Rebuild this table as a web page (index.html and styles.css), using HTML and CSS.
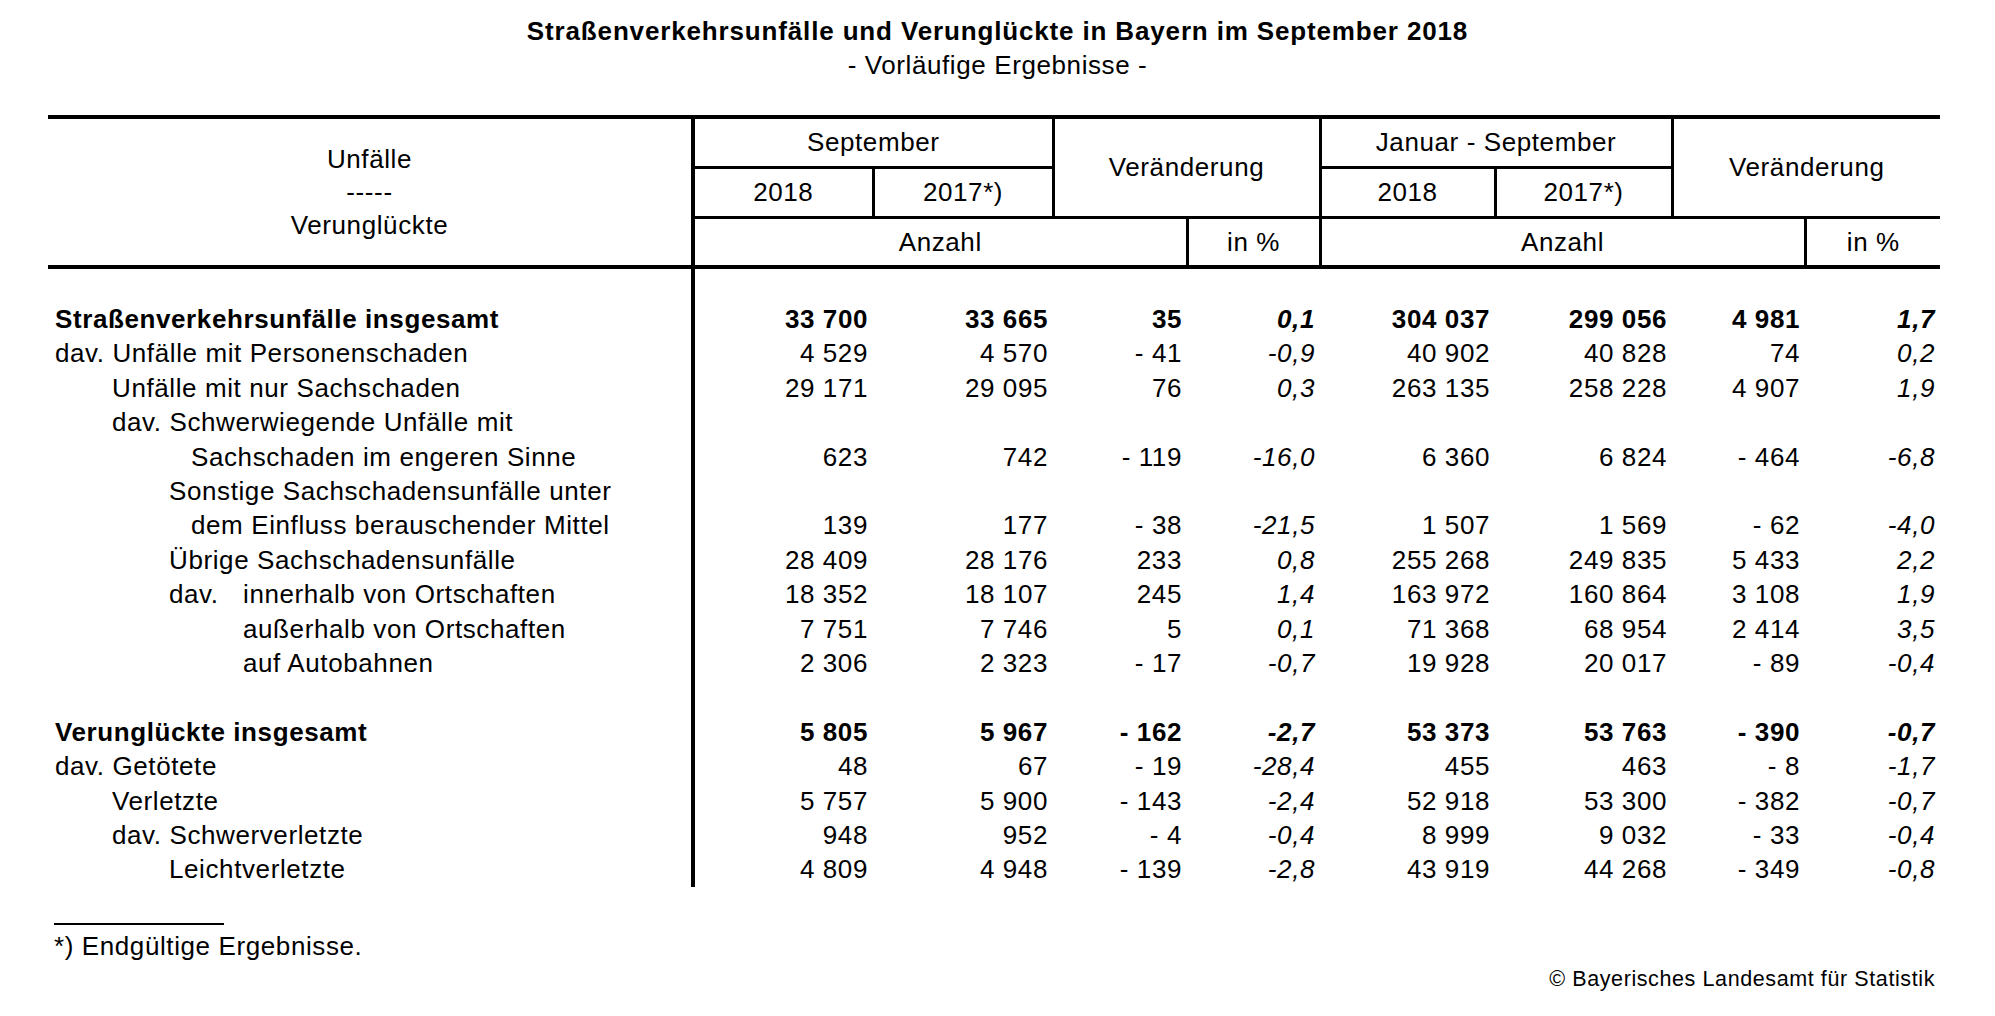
FILE: index.html
```html
<!DOCTYPE html>
<html lang="de">
<head>
<meta charset="utf-8">
<title>Straßenverkehrsunfälle und Verunglückte in Bayern im September 2018</title>
<link rel="stylesheet" href="styles.css">
</head>
<body>
<div class="page">
  <h1 class="title">Straßenverkehrsunfälle und Verunglückte in Bayern im September 2018</h1>
  <p class="subtitle">- Vorläufige Ergebnisse -</p>

  <table class="stats">
    <colgroup>
      <col class="c-label">
      <col class="c-s18"><col class="c-s17"><col class="c-sabs"><col class="c-spct">
      <col class="c-j18"><col class="c-j17"><col class="c-jabs"><col class="c-jpct">
    </colgroup>
    <thead>
      <tr class="hr1">
        <th class="hlabel" rowspan="3"><span class="hl">Unfälle</span><span class="hl">-----</span><span class="hl">Verunglückte</span></th>
        <th colspan="2">September</th>
        <th colspan="2" rowspan="2">Veränderung</th>
        <th colspan="2">Januar - September</th>
        <th colspan="2" rowspan="2" class="last">Veränderung</th>
      </tr>
      <tr class="hr2">
        <th>2018</th>
        <th>2017*)</th>
        <th>2018</th>
        <th>2017*)</th>
      </tr>
      <tr class="hr3">
        <th colspan="3">Anzahl</th>
        <th>in %</th>
        <th colspan="3">Anzahl</th>
        <th class="last">in %</th>
      </tr>
    </thead>
    <tbody>
      <tr class="spacer"><td class="lbl"></td><td colspan="8"></td></tr>
      <tr class="b"><td class="lbl l0">Straßenverkehrsunfälle insgesamt</td><td>33 700</td><td>33 665</td><td>35</td><td class="pct">0,1</td><td>304 037</td><td>299 056</td><td>4 981</td><td class="pct">1,7</td></tr>
      <tr><td class="lbl l0">dav. Unfälle mit Personenschaden</td><td>4 529</td><td>4 570</td><td>- 41</td><td class="pct">-0,9</td><td>40 902</td><td>40 828</td><td>74</td><td class="pct">0,2</td></tr>
      <tr><td class="lbl l1">Unfälle mit nur Sachschaden</td><td>29 171</td><td>29 095</td><td>76</td><td class="pct">0,3</td><td>263 135</td><td>258 228</td><td>4 907</td><td class="pct">1,9</td></tr>
      <tr><td class="lbl l1">dav. Schwerwiegende Unfälle mit</td><td></td><td></td><td></td><td class="pct"></td><td></td><td></td><td></td><td class="pct"></td></tr>
      <tr><td class="lbl l3">Sachschaden im engeren Sinne</td><td>623</td><td>742</td><td>- 119</td><td class="pct">-16,0</td><td>6 360</td><td>6 824</td><td>- 464</td><td class="pct">-6,8</td></tr>
      <tr><td class="lbl l2">Sonstige Sachschadensunfälle unter</td><td></td><td></td><td></td><td class="pct"></td><td></td><td></td><td></td><td class="pct"></td></tr>
      <tr><td class="lbl l3">dem Einfluss berauschender Mittel</td><td>139</td><td>177</td><td>- 38</td><td class="pct">-21,5</td><td>1 507</td><td>1 569</td><td>- 62</td><td class="pct">-4,0</td></tr>
      <tr><td class="lbl l2">Übrige Sachschadensunfälle</td><td>28 409</td><td>28 176</td><td>233</td><td class="pct">0,8</td><td>255 268</td><td>249 835</td><td>5 433</td><td class="pct">2,2</td></tr>
      <tr><td class="lbl l2"><span class="dav">dav.</span>innerhalb von Ortschaften</td><td>18 352</td><td>18 107</td><td>245</td><td class="pct">1,4</td><td>163 972</td><td>160 864</td><td>3 108</td><td class="pct">1,9</td></tr>
      <tr><td class="lbl l4">außerhalb von Ortschaften</td><td>7 751</td><td>7 746</td><td>5</td><td class="pct">0,1</td><td>71 368</td><td>68 954</td><td>2 414</td><td class="pct">3,5</td></tr>
      <tr><td class="lbl l4">auf Autobahnen</td><td>2 306</td><td>2 323</td><td>- 17</td><td class="pct">-0,7</td><td>19 928</td><td>20 017</td><td>- 89</td><td class="pct">-0,4</td></tr>
      <tr class="gap"><td class="lbl"></td><td colspan="8"></td></tr>
      <tr class="b"><td class="lbl l0">Verunglückte insgesamt</td><td>5 805</td><td>5 967</td><td>- 162</td><td class="pct">-2,7</td><td>53 373</td><td>53 763</td><td>- 390</td><td class="pct">-0,7</td></tr>
      <tr><td class="lbl l0">dav. Getötete</td><td>48</td><td>67</td><td>- 19</td><td class="pct">-28,4</td><td>455</td><td>463</td><td>- 8</td><td class="pct">-1,7</td></tr>
      <tr><td class="lbl l1">Verletzte</td><td>5 757</td><td>5 900</td><td>- 143</td><td class="pct">-2,4</td><td>52 918</td><td>53 300</td><td>- 382</td><td class="pct">-0,7</td></tr>
      <tr><td class="lbl l1">dav. Schwerverletzte</td><td>948</td><td>952</td><td>- 4</td><td class="pct">-0,4</td><td>8 999</td><td>9 032</td><td>- 33</td><td class="pct">-0,4</td></tr>
      <tr><td class="lbl l2">Leichtverletzte</td><td>4 809</td><td>4 948</td><td>- 139</td><td class="pct">-2,8</td><td>43 919</td><td>44 268</td><td>- 349</td><td class="pct">-0,8</td></tr>
    </tbody>
  </table>

  <div class="footnote-rule"></div>
  <p class="footnote">*) Endgültige Ergebnisse.</p>
  <p class="copyright">© Bayerisches Landesamt für Statistik</p>
</div>
</body>
</html>
```

FILE: styles.css
```css
html, body {
  margin: 0;
  padding: 0;
  background: #ffffff;
}

body {
  font-family: "Liberation Sans", Arial, sans-serif;
  font-size: 26px;
  letter-spacing: 0.6px;
  color: #000000;
}

.page {
  width: 1995px;
}

.title {
  margin: 14px 0 0 0;
  font-size: 26px;
  font-weight: bold;
  letter-spacing: 0.85px;
  line-height: 34px;
  text-align: center;
}

.subtitle {
  margin: 0;
  line-height: 34px;
  text-align: center;
}

.stats {
  margin: 33px 0 0 48px;
  width: 1892px;
  table-layout: fixed;
  border-collapse: collapse;
}

.c-label { width: 645px; }
.c-s18 { width: 180px; }
.c-s17 { width: 180px; }
.c-sabs { width: 134px; }
.c-spct { width: 133px; }
.c-j18 { width: 175px; }
.c-j17 { width: 177px; }
.c-jabs { width: 133px; }
.c-jpct { width: 135px; }

.stats th {
  font-weight: normal;
  padding: 0;
  text-align: center;
  vertical-align: middle;
  border: 3px solid #000000;
  line-height: 30px;
}

.stats thead tr.hr1 th { border-top: 4px solid #000000; }
.stats thead tr.hr3 th { border-bottom: 4px solid #000000; }
.stats thead th.hlabel {
  border-left: none;
  border-right: 4px solid #000000;
  border-top: 4px solid #000000;
  border-bottom: 4px solid #000000;
}
.stats thead th.last { border-right: none; }

.hr1, .hr2, .hr3 { height: 50px; }

.hl {
  display: block;
  line-height: 33px;
}

.stats td {
  padding: 0 5px 0 0;
  text-align: right;
  white-space: nowrap;
  line-height: 34.4px;
  height: 34.4px;
}

.stats td.lbl {
  text-align: left;
  padding: 0;
  border-right: 4px solid #000000;
}

.stats tr.spacer td { height: 33px; }
.stats tr.gap td { height: 34.4px; }

.b td { font-weight: bold; }

.pct { font-style: italic; }

.l0 { padding-left: 7px !important; }
.l1 { padding-left: 64px !important; }
.l2 { padding-left: 121px !important; }
.l3 { padding-left: 143px !important; }
.l4 { padding-left: 195px !important; }

.dav {
  display: inline-block;
  width: 74px;
}

.footnote-rule {
  margin: 36px 0 0 54px;
  width: 170px;
  height: 2px;
  background: #000000;
}

.footnote {
  margin: 4px 0 0 54px;
  line-height: 34px;
}

.copyright {
  margin: 2px 0 0 0;
  padding-right: 60px;
  text-align: right;
  font-size: 21.5px;
  letter-spacing: 0.6px;
  line-height: 28px;
}
```
